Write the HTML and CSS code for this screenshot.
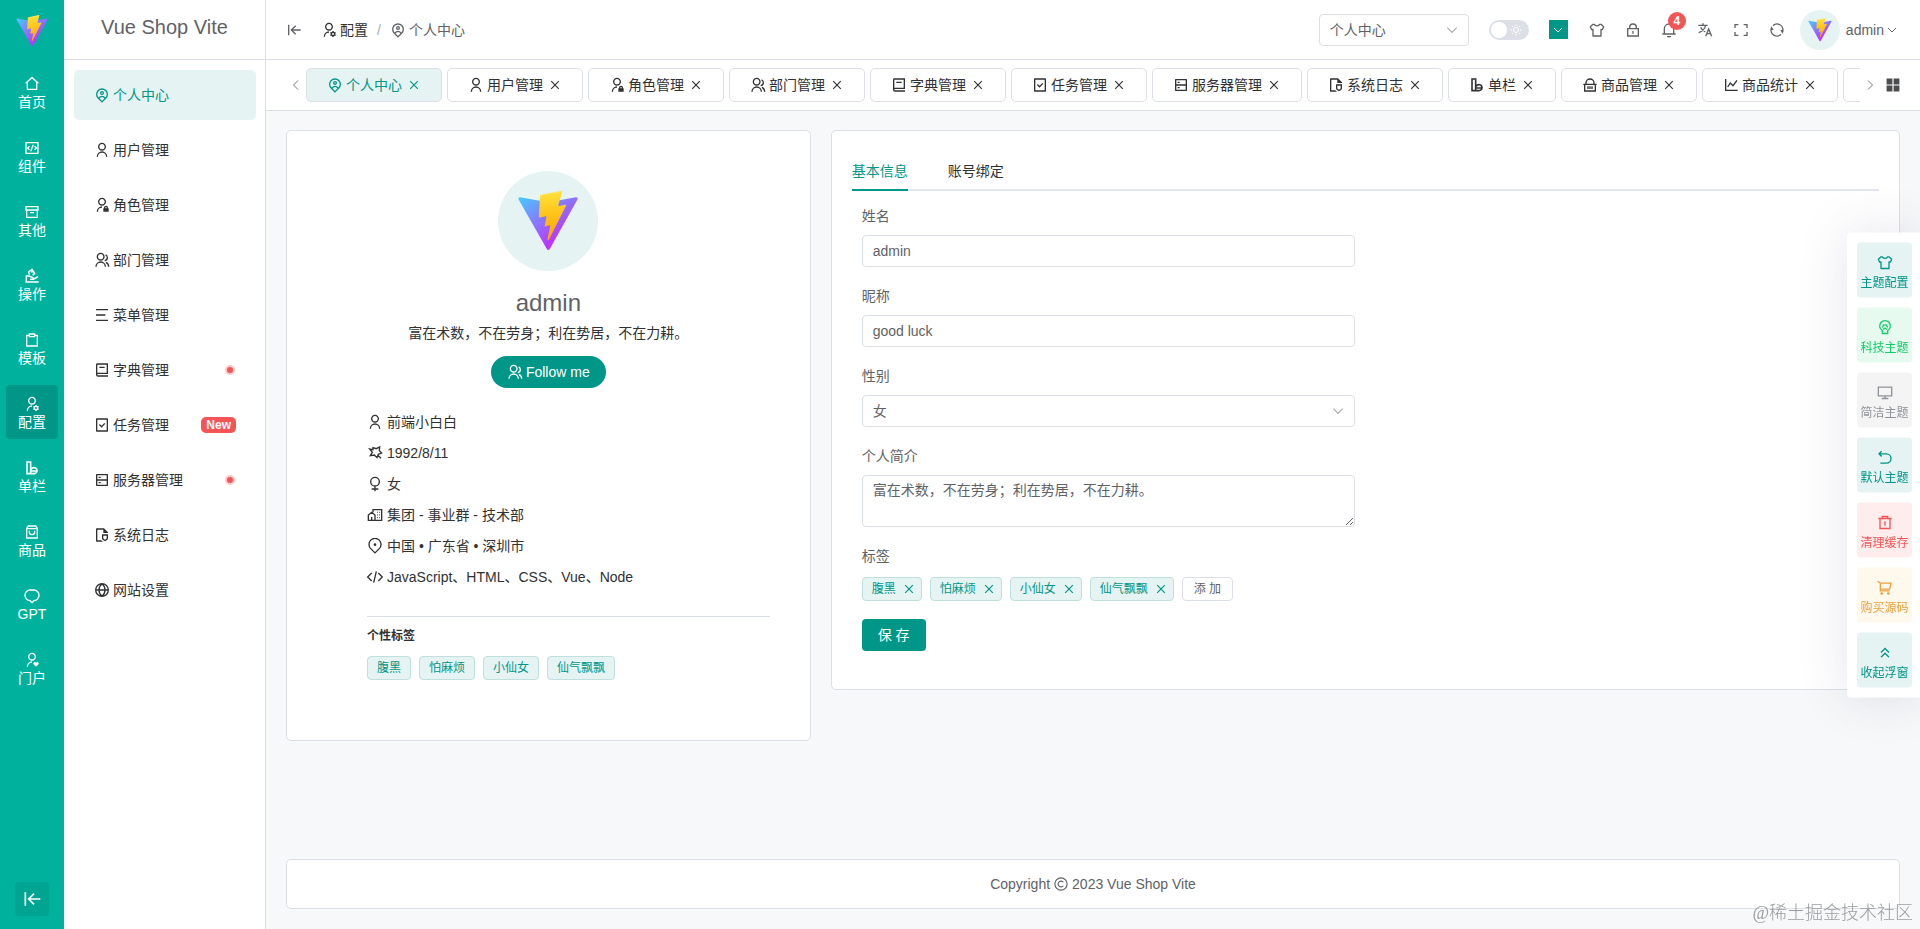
FILE: index.html
```html
<!DOCTYPE html>
<html lang="zh-CN">
<head>
    <meta charset="UTF-8">
    <meta name="viewport" content="width=device-width, initial-scale=1.0">
    <title>个人中心 - Vue Shop Vite</title>
    <link rel="stylesheet" href="styles.css">
</head>
<body>
    <!-- Icon sprite -->
    <svg class="sprite" aria-hidden="true">
        <defs>
            <linearGradient id="logo-blue" x1="6" y1="33" x2="235" y2="344" gradientUnits="userSpaceOnUse">
                <stop stop-color="#41D1FF"/>
                <stop offset="1" stop-color="#BD34FE"/>
            </linearGradient>
            <linearGradient id="logo-yellow" x1="194" y1="9" x2="236" y2="293" gradientUnits="userSpaceOnUse">
                <stop stop-color="#FFEA83"/>
                <stop offset="0.083" stop-color="#FFDD35"/>
                <stop offset="1" stop-color="#FFA800"/>
            </linearGradient>
        </defs>
        <symbol id="i-logo" viewBox="0 0 410 404">
            <path fill="url(#logo-blue)" d="M399.641 59.5246L215.643 388.545C211.844 395.338 202.084 395.378 198.228 388.618L10.5817 59.5563C6.38087 52.1896 12.6802 43.2665 21.0281 44.7586L205.223 77.6824C206.398 77.8924 207.601 77.8904 208.776 77.6763L389.119 44.8058C397.439 43.2894 403.768 52.1434 399.641 59.5246Z"/>
            <path fill="url(#logo-yellow)" d="M292.965 1.5744L156.801 28.2552C154.563 28.6937 152.906 30.5903 152.771 32.8664L144.395 174.33C144.198 177.662 147.258 180.248 150.51 179.498L188.42 170.749C191.967 169.931 195.172 173.055 194.443 176.622L183.18 231.775C182.422 235.487 185.907 238.661 189.532 237.56L212.947 230.446C216.577 229.344 220.065 232.527 219.297 236.242L201.398 322.875C200.278 328.294 207.486 331.249 210.492 326.603L212.5 323.5L323.454 102.072C325.312 98.3645 322.108 94.137 318.036 94.9228L279.014 102.454C275.347 103.161 272.227 99.746 273.262 96.1583L298.731 7.86689C299.767 4.27314 296.636 0.855181 292.965 1.5744Z"/>
        </symbol>
        <symbol id="i-home" viewBox="0 0 24 24"><path d="M19 21H5a1 1 0 0 1-1-1v-9H1l10.327-9.388a1 1 0 0 1 1.346 0L23 11h-3v9a1 1 0 0 1-1 1zM6 19h12V9.157l-6-5.454-6 5.454V19z"/></symbol>
        <symbol id="i-codebox" viewBox="0 0 24 24"><path d="M3 3h18a1 1 0 0 1 1 1v16a1 1 0 0 1-1 1H3a1 1 0 0 1-1-1V4a1 1 0 0 1 1-1zm1 2v14h16V5H4zm16 7-3.500 3.500-1.400-1.400L17.200 12l-2.100-2.100 1.400-1.400L20 12zM6.800 12l2.100 2.100-1.400 1.400L4 12l3.500-3.500 1.400 1.400L6.800 12zm4.400 5H9.100l3.700-10h2.100l-3.700 10z"/></symbol>
        <symbol id="i-archive" viewBox="0 0 24 24"><path d="M3 10H2V4a1 1 0 0 1 1-1h18a1 1 0 0 1 1 1v6h-1v10a1 1 0 0 1-1 1H4a1 1 0 0 1-1-1V10zm16 0H5v9h14v-9zM4 5v3h16V5H4zm5 7h6v2H9v-2z"/></symbol>
        <symbol id="i-hand" viewBox="0 0 24 24"><path d="M2 21h20M3.500 20.500V12h4l6 2.500V17H9M14 17l7-4M8 10 7 6l5-4 4 6-3 3M12 2v5" fill="none" stroke="currentColor" stroke-width="2.200"/></symbol>
        <symbol id="i-clipboard" viewBox="0 0 24 24"><path d="M7 4V2h10v2h3.007c.548 0 .993.445.993.993v16.014a.994.994 0 0 1-.993.993H3.993A.994.994 0 0 1 3 21.007V4.993C3 4.445 3.445 4 3.993 4H7zm0 2H5v14h14V6h-2v2H7V6zm2-2v2h6V4H9z"/></symbol>
        <symbol id="i-user-settings" viewBox="0 0 24 24"><path d="M12 14v2a6 6 0 0 0-6 6H4a8 8 0 0 1 8-8zm0-1c-3.315 0-6-2.685-6-6s2.685-6 6-6 6 2.685 6 6-2.685 6-6 6zm0-2c2.210 0 4-1.790 4-4s-1.790-4-4-4-4 1.790-4 4 1.790 4 4 4zm2.595 7.812a3.510 3.510 0 0 1 0-1.623l-.992-.573 1-1.732.992.573A3.496 3.496 0 0 1 17 14.645V13.500h2v1.145c.532.158 1.012.44 1.405.812l.992-.573 1 1.732-.992.573a3.510 3.510 0 0 1 0 1.622l.992.573-1 1.732-.992-.573a3.496 3.496 0 0 1-1.405.812V22.500h-2v-1.145a3.496 3.496 0 0 1-1.405-.812l-.992.573-1-1.732.992-.572zM18 19.500a1.500 1.500 0 1 0 0-3 1.500 1.500 0 0 0 0 3z"/></symbol>
        <symbol id="i-column" viewBox="0 0 24 24"><path d="M4.500 3H10v17.500H4.500zM10 20.500h5a4.500 4.500 0 0 0 4.500-4.500c0-5-6-6-9-2M10 16.500h9" fill="none" stroke="currentColor" stroke-width="2.400"/></symbol>
        <symbol id="i-bag" viewBox="0 0 24 24"><path d="M6.500 2h11a1 1 0 0 1 .8.4L21 6v15a1 1 0 0 1-1 1H4a1 1 0 0 1-1-1V6l2.700-3.600a1 1 0 0 1 .8-.4zM19 8H5v12h14V8zm-.5-2L17 4H7L5.500 6h13zM9 10v2a3 3 0 0 0 6 0v-2h2v2a5 5 0 0 1-10 0v-2h2z"/></symbol>
        <symbol id="i-chat" viewBox="0 0 24 24"><path d="M10 3h4a8 8 0 0 1 1 16l-3 3-3-3a8 8 0 0 1 1-16z" fill="none" stroke="currentColor" stroke-width="2"/></symbol>
        <symbol id="i-user-heart" viewBox="0 0 24 24"><path d="M12 14v2a6 6 0 0 0-6 6H4a8 8 0 0 1 8-8zm0-1c-3.315 0-6-2.685-6-6s2.685-6 6-6 6 2.685 6 6-2.685 6-6 6zm0-2c2.210 0 4-1.790 4-4s-1.790-4-4-4-4 1.790-4 4 1.790 4 4 4zm5.841 4.659.176.177.178-.177a2.250 2.250 0 0 1 3.182 3.182l-3.360 3.359-3.358-3.359a2.250 2.250 0 0 1 3.182-3.182z"/></symbol>
        <symbol id="i-fold" viewBox="0 0 24 24"><path d="M4 4v16M22 12H9M14.500 5.500 8 12l6.500 6.500" fill="none" stroke="currentColor" stroke-width="2"/></symbol>
        <symbol id="i-pin-user" viewBox="0 0 24 24"><path d="M17.084 15.812a7 7 0 1 0-10.168 0A5.996 5.996 0 0 1 12 13a5.996 5.996 0 0 1 5.084 2.812zm-8.699 1.473L12 20.899l3.615-3.614a4 4 0 0 0-7.230 0zM12 23.728l-6.364-6.364a9 9 0 1 1 12.728 0L12 23.728zM12 10a1 1 0 1 0 0-2 1 1 0 0 0 0 2zm0 2a3 3 0 1 1 0-6 3 3 0 0 1 0 6z"/></symbol>
        <symbol id="i-user" viewBox="0 0 24 24"><path d="M4 22a8 8 0 1 1 16 0h-2a6 6 0 1 0-12 0H4zm8-9c-3.315 0-6-2.685-6-6s2.685-6 6-6 6 2.685 6 6-2.685 6-6 6zm0-2c2.210 0 4-1.790 4-4s-1.790-4-4-4-4 1.790-4 4 1.790 4 4 4z"/></symbol>
        <symbol id="i-admin" viewBox="0 0 24 24"><path d="M12 14v2a6 6 0 0 0-6 6H4a8 8 0 0 1 8-8zm0-1c-3.315 0-6-2.685-6-6s2.685-6 6-6 6 2.685 6 6-2.685 6-6 6zm0-2c2.210 0 4-1.790 4-4s-1.790-4-4-4-4 1.790-4 4 1.790 4 4 4zm9 6h1v5h-8v-5h1v-1a3 3 0 0 1 6 0v1zm-2 0v-1a1 1 0 0 0-2 0v1h2z"/></symbol>
        <symbol id="i-group" viewBox="0 0 24 24"><path d="M2 22a8 8 0 1 1 16 0h-2a6 6 0 1 0-12 0H2zm8-9c-3.315 0-6-2.685-6-6s2.685-6 6-6 6 2.685 6 6-2.685 6-6 6zm0-2c2.210 0 4-1.790 4-4s-1.790-4-4-4-4 1.790-4 4 1.790 4 4 4zm8.284 3.703A8.002 8.002 0 0 1 23 22h-2a6.001 6.001 0 0 0-3.537-5.473l.82-1.824zm-.688-11.290A5.500 5.500 0 0 1 21 8.500a5.499 5.499 0 0 1-5 5.478v-2.013a3.500 3.500 0 0 0 1.041-6.609l.555-1.943z"/></symbol>
        <symbol id="i-menu" viewBox="0 0 24 24"><path d="M3 3h18v2H3V3zm0 8h14v2H3v-2zm0 8h18v2H3v-2z"/></symbol>
        <symbol id="i-book" viewBox="0 0 24 24"><path d="M21 18H6a1 1 0 0 0 0 2h15v2H6a3 3 0 0 1-3-3V4a2 2 0 0 1 2-2h16v16zM5 16.050c.162-.033.329-.05.5-.05H19V4H5v12.050zM16 9H8V7h8v2z"/></symbol>
        <symbol id="i-task" viewBox="0 0 24 24"><path d="M21 2.992v18.016a1 1 0 0 1-.993.992H3.993A.993.993 0 0 1 3 21.008V2.992A1 1 0 0 1 3.993 2h16.014c.548 0 .993.444.993.992zM19 4H5v16h14V4zm-7.707 9.121 4.243-4.242 1.414 1.414-5.657 5.657-3.890-3.890 1.415-1.414 2.475 2.475z"/></symbol>
        <symbol id="i-server" viewBox="0 0 24 24"><path d="M5 11h14V5H5v6zm16-7v16a1 1 0 0 1-1 1H4a1 1 0 0 1-1-1V4a1 1 0 0 1 1-1h16a1 1 0 0 1 1 1zm-2 9H5v6h14v-6zM7 15h3v2H7v-2zm0-8h3v2H7V7z"/></symbol>
        <symbol id="i-log" viewBox="0 0 24 24"><path d="M14 9V4H5v16h6.056c.328.417.724.785 1.180 1.085l1.390.915H3.993A.993.993 0 0 1 3 21.008V2.992C3 2.455 3.449 2 4.002 2h10.995L21 8v1h-7zm-2 2h9v5.949c0 .99-.501 1.916-1.336 2.465L16.500 21.498l-3.164-2.084A2.953 2.953 0 0 1 12 16.950V11zm2 5.949c0 .316.162.614.436.795l2.064 1.360 2.064-1.360a.954.954 0 0 0 .436-.795V13h-5v3.949z"/></symbol>
        <symbol id="i-globe" viewBox="0 0 24 24"><path d="M2 12h20M12 2.500a9.500 9.500 0 1 0 0 19 9.500 9.500 0 1 0 0-19zM12 2.500c-6 5-6 14 0 19M12 2.500c6 5 6 14 0 19" fill="none" stroke="currentColor" stroke-width="2"/></symbol>
        <symbol id="i-basket" viewBox="0 0 24 24"><path d="M2 11h20M4 11v10h16V11M6 11V9a6 6 0 0 1 12 0v2M9 14v4M12 14v4M15 14v4" fill="none" stroke="currentColor" stroke-width="2"/></symbol>
        <symbol id="i-chart" viewBox="0 0 24 24"><path d="M4 3v17h18M7 15l4-6 4 4 6-8" fill="none" stroke="currentColor" stroke-width="2"/></symbol>
        <symbol id="i-close" viewBox="0 0 24 24"><path d="M5.500 5.500l13 13M18.500 5.500l-13 13" fill="none" stroke="currentColor" stroke-width="2"/></symbol>
        <symbol id="i-down" viewBox="0 0 24 24"><path d="M4 8l8 8 8-8" fill="none" stroke="currentColor" stroke-width="2"/></symbol>
        <symbol id="i-left" viewBox="0 0 24 24"><path d="M16 3l-9 9 9 9" fill="none" stroke="currentColor" stroke-width="2"/></symbol>
        <symbol id="i-right" viewBox="0 0 24 24"><path d="M8 3l9 9-9 9" fill="none" stroke="currentColor" stroke-width="2"/></symbol>
        <symbol id="i-grid" viewBox="0 0 24 24"><path d="M1 1h10v10H1zM13 1h10v10H13zM1 13h10v10H1zM13 13h10v10H13z"/></symbol>
        <symbol id="i-sun" viewBox="0 0 24 24"><path d="M12 7a5 5 0 1 0 0 10 5 5 0 1 0 0-10zM12 1v3M12 20v3M1 12h3M20 12h3M4 4l2 2M18 18l2 2M4 20l2-2M18 6l2-2" fill="none" stroke="currentColor" stroke-width="2"/></symbol>
        <symbol id="i-shirt" viewBox="0 0 24 24"><path d="M8 3.500c1 3 7 3 8 0h2l4 3.500-2 4.500-2-.5v10H6V11l-2 .5L2 7l4-3.500z" fill="none" stroke="currentColor" stroke-width="2" stroke-linejoin="round"/></symbol>
        <symbol id="i-lock" viewBox="0 0 24 24"><path d="M4 10h16v11H4zM7 10V8a5 5 0 0 1 10 0v2M12 13.500v4" fill="none" stroke="currentColor" stroke-width="2"/></symbol>
        <symbol id="i-bell" viewBox="0 0 24 24"><path d="M20 17h2v2H2v-2h2v-7a8 8 0 1 1 16 0v7zm-2 0v-7a6 6 0 1 0-12 0v7h12zm-9 4h6v2H9v-2z"/></symbol>
        <symbol id="i-translate" viewBox="0 0 24 24"><path d="M2 5h14M9 2v3M13 5c-1 4-5 9-10.500 11M5.500 8c1 3 4 5.500 7 7M13 21.500l4.500-11 4.500 11M14.500 17.500h6" fill="none" stroke="currentColor" stroke-width="2"/></symbol>
        <symbol id="i-full" viewBox="0 0 24 24"><path d="M3 9V4h5M16 4h5v5M21 15v5h-5M8 20H3v-5" fill="none" stroke="currentColor" stroke-width="2"/></symbol>
        <symbol id="i-refresh" viewBox="0 0 24 24"><path d="M5.463 4.433A9.961 9.961 0 0 1 12 2c5.523 0 10 4.477 10 10 0 2.136-.67 4.116-1.810 5.740L17 12h3A8 8 0 0 0 6.460 6.228l-.997-1.795zm13.074 15.134A9.961 9.961 0 0 1 12 22C6.477 22 2 17.523 2 12c0-2.136.67-4.116 1.810-5.740L7 12H4a8 8 0 0 0 13.540 5.772l.997 1.795z"/></symbol>
        <symbol id="i-star" viewBox="0 0 24 24"><path d="M9 4l5 1.500L19 3l-.5 5.500L22 12l-5 2-2 5-4-4-6 1 3-5-4-5 5 1zM17 16l4 4" fill="none" stroke="currentColor" stroke-width="2"/></symbol>
        <symbol id="i-female" viewBox="0 0 24 24"><path d="M12 2a6.500 6.500 0 1 0 0 13 6.500 6.500 0 1 0 0-13zM12 15v8M7 19.500h10" fill="none" stroke="currentColor" stroke-width="2"/></symbol>
        <symbol id="i-building" viewBox="0 0 24 24"><path d="M9 8V4h13v16H2v-8l5-4 5 4v8M7 20v-5M15 8h1M18 8h1M15 12h1M18 12h1M15 16h1M18 16h1" fill="none" stroke="currentColor" stroke-width="2"/></symbol>
        <symbol id="i-pin" viewBox="0 0 24 24"><path d="M12 22.300l-6.400-6.400a9 9 0 1 1 12.800 0z" fill="none" stroke="currentColor" stroke-width="2"/><circle cx="12" cy="10" r="2"/></symbol>
        <symbol id="i-code" viewBox="0 0 24 24"><path d="M7 6l-6 6 6 6M17 6l6 6-6 6M14 3.500l-4 17" fill="none" stroke="currentColor" stroke-width="2"/></symbol>
        <symbol id="i-copyright" viewBox="0 0 24 24"><circle cx="12" cy="12" r="10.500" fill="none" stroke="currentColor" stroke-width="2"/><path d="M16 9a5 5 0 1 0 0 6" fill="none" stroke="currentColor" stroke-width="2"/></symbol>
        <symbol id="i-robot" viewBox="0 0 24 24"><path d="M8 16.500a8 8 0 1 1 8 0V21H8zM8 12l2-4h4l2 4M9 15l3-2 3 2" fill="none" stroke="currentColor" stroke-width="2"/></symbol>
        <symbol id="i-monitor" viewBox="0 0 24 24"><path d="M2 4h20v13H2zM12 17v4M7 21h10" fill="none" stroke="currentColor" stroke-width="2"/></symbol>
        <symbol id="i-back" viewBox="0 0 24 24"><path d="M7 2.500 3 6.500l4 4M3 6.500h11a7 7 0 0 1 0 14H5" fill="none" stroke="currentColor" stroke-width="2"/></symbol>
        <symbol id="i-trash" viewBox="0 0 24 24"><path d="M2 6h20M4.500 6v15h15V6M8 6V3h8v3M12 10v7" fill="none" stroke="currentColor" stroke-width="2"/></symbol>
        <symbol id="i-cart" viewBox="0 0 24 24"><path d="M1 2.500l4 3h16l-2 9H6M5 5v12h14" fill="none" stroke="currentColor" stroke-width="2"/><circle cx="7" cy="21" r="2"/><circle cx="17" cy="21" r="2"/></symbol>
        <symbol id="i-up2" viewBox="0 0 24 24"><path d="M6 12l6-6 6 6M6 19l6-6 6 6" fill="none" stroke="currentColor" stroke-width="2"/></symbol>
    </svg>

    <!-- First level menu -->
    <nav class="rail">
        <svg class="rail-logo"><use href="#i-logo"/></svg>
        <a class="rail-item" href="#"><svg class="icon"><use href="#i-home"/></svg>首页</a>
        <a class="rail-item" href="#"><svg class="icon"><use href="#i-codebox"/></svg>组件</a>
        <a class="rail-item" href="#"><svg class="icon"><use href="#i-archive"/></svg>其他</a>
        <a class="rail-item" href="#"><svg class="icon"><use href="#i-hand"/></svg>操作</a>
        <a class="rail-item" href="#"><svg class="icon"><use href="#i-clipboard"/></svg>模板</a>
        <a class="rail-item active" href="#"><svg class="icon"><use href="#i-user-settings"/></svg>配置</a>
        <a class="rail-item" href="#"><svg class="icon"><use href="#i-column"/></svg>单栏</a>
        <a class="rail-item" href="#"><svg class="icon"><use href="#i-bag"/></svg>商品</a>
        <a class="rail-item" href="#"><svg class="icon"><use href="#i-chat"/></svg>GPT</a>
        <a class="rail-item" href="#"><svg class="icon"><use href="#i-user-heart"/></svg>门户</a>
        <button class="rail-fold" type="button" aria-label="收起菜单"><svg class="icon"><use href="#i-fold"/></svg></button>
    </nav>

    <!-- Second level menu -->
    <aside class="side">
        <div class="side-title">Vue Shop Vite</div>
        <nav class="side-menu">
            <a class="side-item active" href="#"><svg class="icon"><use href="#i-pin-user"/></svg>个人中心</a>
            <a class="side-item" href="#"><svg class="icon"><use href="#i-user"/></svg>用户管理</a>
            <a class="side-item" href="#"><svg class="icon"><use href="#i-admin"/></svg>角色管理</a>
            <a class="side-item" href="#"><svg class="icon"><use href="#i-group"/></svg>部门管理</a>
            <a class="side-item" href="#"><svg class="icon"><use href="#i-menu"/></svg>菜单管理</a>
            <a class="side-item" href="#"><svg class="icon"><use href="#i-book"/></svg>字典管理<span class="dot"></span></a>
            <a class="side-item" href="#"><svg class="icon"><use href="#i-task"/></svg>任务管理<span class="badge-new">New</span></a>
            <a class="side-item" href="#"><svg class="icon"><use href="#i-server"/></svg>服务器管理<span class="dot"></span></a>
            <a class="side-item" href="#"><svg class="icon"><use href="#i-log"/></svg>系统日志</a>
            <a class="side-item" href="#"><svg class="icon"><use href="#i-globe"/></svg>网站设置</a>
        </nav>
    </aside>

    <div class="page">
        <header class="header">
            <button class="icon-btn" type="button" aria-label="折叠"><svg class="icon"><use href="#i-fold"/></svg></button>
            <div class="breadcrumb">
                <a class="crumb root" href="#"><svg class="icon"><use href="#i-user-settings"/></svg>配置</a>
                <span class="crumb-sep">/</span>
                <span class="crumb"><svg class="icon"><use href="#i-pin-user"/></svg>个人中心</span>
            </div>
            <div class="select-wrap header-select">
                <select class="field" aria-label="菜单搜索"><option>个人中心</option></select>
                <svg class="select-arrow"><use href="#i-down"/></svg>
            </div>
            <label class="switch">
                <input type="checkbox" aria-label="暗黑模式">
                <span class="switch-core"><svg><use href="#i-sun"/></svg></span>
            </label>
            <button class="color-btn" type="button" aria-label="主题色"><svg><use href="#i-down"/></svg></button>
            <div class="tools">
                <button class="icon-btn" type="button" aria-label="主题"><svg class="icon"><use href="#i-shirt"/></svg></button>
                <button class="icon-btn" type="button" aria-label="锁屏"><svg class="icon"><use href="#i-lock"/></svg></button>
                <button class="icon-btn" type="button" aria-label="消息"><svg class="icon"><use href="#i-bell"/></svg><span class="count">4</span></button>
                <button class="icon-btn" type="button" aria-label="语言"><svg class="icon"><use href="#i-translate"/></svg></button>
                <button class="icon-btn" type="button" aria-label="全屏"><svg class="icon"><use href="#i-full"/></svg></button>
                <button class="icon-btn" type="button" aria-label="刷新"><svg class="icon"><use href="#i-refresh"/></svg></button>
            </div>
            <a class="account" href="#">
                <span class="avatar"><svg><use href="#i-logo"/></svg></span>
                admin
                <svg class="account-arrow"><use href="#i-down"/></svg>
            </a>
        </header>

        <div class="tabbar">
            <button class="tab-arrow" type="button" aria-label="向左"><svg><use href="#i-left"/></svg></button>
            <div class="tab-list">
                <a class="tab active" href="#"><svg class="icon"><use href="#i-pin-user"/></svg>个人中心<svg class="tab-close"><use href="#i-close"/></svg></a>
                <a class="tab" href="#"><svg class="icon"><use href="#i-user"/></svg>用户管理<svg class="tab-close"><use href="#i-close"/></svg></a>
                <a class="tab" href="#"><svg class="icon"><use href="#i-admin"/></svg>角色管理<svg class="tab-close"><use href="#i-close"/></svg></a>
                <a class="tab" href="#"><svg class="icon"><use href="#i-group"/></svg>部门管理<svg class="tab-close"><use href="#i-close"/></svg></a>
                <a class="tab" href="#"><svg class="icon"><use href="#i-book"/></svg>字典管理<svg class="tab-close"><use href="#i-close"/></svg></a>
                <a class="tab" href="#"><svg class="icon"><use href="#i-task"/></svg>任务管理<svg class="tab-close"><use href="#i-close"/></svg></a>
                <a class="tab" href="#"><svg class="icon"><use href="#i-server"/></svg>服务器管理<svg class="tab-close"><use href="#i-close"/></svg></a>
                <a class="tab" href="#"><svg class="icon"><use href="#i-log"/></svg>系统日志<svg class="tab-close"><use href="#i-close"/></svg></a>
                <a class="tab" href="#"><svg class="icon"><use href="#i-column"/></svg>单栏<svg class="tab-close"><use href="#i-close"/></svg></a>
                <a class="tab" href="#"><svg class="icon"><use href="#i-basket"/></svg>商品管理<svg class="tab-close"><use href="#i-close"/></svg></a>
                <a class="tab" href="#"><svg class="icon"><use href="#i-chart"/></svg>商品统计<svg class="tab-close"><use href="#i-close"/></svg></a>
                <span class="tab tab-rest"></span>
            </div>
            <button class="tab-arrow" type="button" aria-label="向右"><svg><use href="#i-right"/></svg></button>
            <button class="tab-more" type="button" aria-label="更多"><svg><use href="#i-grid"/></svg></button>
        </div>

        <main class="main">
            <div class="cards">
                <section class="card profile">
                    <div class="profile-avatar"><svg><use href="#i-logo"/></svg></div>
                    <h1 class="profile-name">admin</h1>
                    <p class="profile-bio">富在术数，不在劳身；利在势居，不在力耕。</p>
                    <button class="follow" type="button"><svg class="icon"><use href="#i-group"/></svg>Follow me</button>
                    <div class="profile-info">
                        <ul class="info-list">
                            <li><svg class="icon"><use href="#i-user"/></svg>前端小白白</li>
                            <li><svg class="icon"><use href="#i-star"/></svg>1992/8/11</li>
                            <li><svg class="icon"><use href="#i-female"/></svg>女</li>
                            <li><svg class="icon"><use href="#i-building"/></svg>集团 - 事业群 - 技术部</li>
                            <li><svg class="icon"><use href="#i-pin"/></svg>中国 • 广东省 • 深圳市</li>
                            <li><svg class="icon"><use href="#i-code"/></svg>JavaScript、HTML、CSS、Vue、Node</li>
                        </ul>
                        <h2 class="tags-title">个性标签</h2>
                        <div class="tags">
                            <span class="tag">腹黑</span>
                            <span class="tag">怕麻烦</span>
                            <span class="tag">小仙女</span>
                            <span class="tag">仙气飘飘</span>
                        </div>
                    </div>
                </section>

                <section class="card detail">
                    <div class="pane-tabs">
                        <a class="pane-tab active" href="#">基本信息</a>
                        <a class="pane-tab" href="#">账号绑定</a>
                    </div>
                    <form class="form">
                        <div class="form-item">
                            <label for="name">姓名</label>
                            <input class="field" type="text" id="name" value="admin">
                        </div>
                        <div class="form-item">
                            <label for="nickname">昵称</label>
                            <input class="field" type="text" id="nickname" value="good luck">
                        </div>
                        <div class="form-item">
                            <label for="gender">性别</label>
                            <div class="select-wrap">
                                <select class="field" id="gender"><option>女</option><option>男</option></select>
                                <svg class="select-arrow"><use href="#i-down"/></svg>
                            </div>
                        </div>
                        <div class="form-item">
                            <label for="intro">个人简介</label>
                            <textarea class="field" id="intro">富在术数，不在劳身；利在势居，不在力耕。</textarea>
                        </div>
                        <div class="form-item">
                            <span class="form-label">标签</span>
                            <div class="tags">
                                <span class="tag closable">腹黑<svg><use href="#i-close"/></svg></span>
                                <span class="tag closable">怕麻烦<svg><use href="#i-close"/></svg></span>
                                <span class="tag closable">小仙女<svg><use href="#i-close"/></svg></span>
                                <span class="tag closable">仙气飘飘<svg><use href="#i-close"/></svg></span>
                                <button class="add-tag" type="button">添 加</button>
                            </div>
                        </div>
                        <div class="form-item">
                            <button class="save" type="button">保 存</button>
                        </div>
                    </form>
                </section>
            </div>
            <footer class="footer">Copyright <svg><use href="#i-copyright"/></svg> 2023 Vue Shop Vite</footer>
        </main>
    </div>

    <!-- Floating theme panel -->
    <div class="float">
        <button class="float-item primary" type="button"><svg class="icon"><use href="#i-shirt"/></svg>主题配置</button>
        <button class="float-item success" type="button"><svg class="icon"><use href="#i-robot"/></svg>科技主题</button>
        <button class="float-item info" type="button"><svg class="icon"><use href="#i-monitor"/></svg>简洁主题</button>
        <button class="float-item primary" type="button"><svg class="icon"><use href="#i-back"/></svg>默认主题</button>
        <button class="float-item danger" type="button"><svg class="icon"><use href="#i-trash"/></svg>清理缓存</button>
        <button class="float-item warning" type="button"><svg class="icon"><use href="#i-cart"/></svg>购买源码</button>
        <button class="float-item primary" type="button"><svg class="icon"><use href="#i-up2"/></svg>收起浮窗</button>
    </div>

    <div class="watermark">@稀土掘金技术社区</div>
</body>
</html>
```
FILE: styles.css
```css
:root {
    --primary: #009688;
    --primary-light: #e5f3f2;
    --border: #dcdfe6;
    --text: #303133;
    --text-regular: #606266;
    --danger: #f35455;
}
* {
    box-sizing: border-box;
}
body {
    display: flex;
    min-height: 100vh;
    margin: 0;
    font-family: "Liberation Sans", "Noto Sans CJK SC", sans-serif;
    font-size: 14px;
    line-height: 20px;
    color: var(--text);
    background-color: #f6f8f9;
}
a {
    color: inherit;
    text-decoration: none;
}
button, input, select, textarea {
    font: inherit;
    color: inherit;
}
button {
    padding: 0;
    border: none;
    background: none;
    cursor: pointer;
}
svg {
    flex-shrink: 0;
    fill: currentColor;
}
.sprite {
    position: absolute;
    width: 0;
    height: 0;
}
.icon {
    width: 16px;
    height: 16px;
}

/* First level menu */
.rail {
    position: sticky;
    top: 0;
    display: flex;
    flex-direction: column;
    align-items: center;
    gap: 10px;
    flex-shrink: 0;
    width: 64px;
    height: 100vh;
    padding: 15px 0 13px;
    color: white;
    background-color: #00b29d;
}
.rail-logo {
    width: 34px;
    height: 32px;
    margin-bottom: 8px;
}
.rail-item {
    display: flex;
    flex-direction: column;
    align-items: center;
    justify-content: center;
    width: 52px;
    height: 54px;
    padding-top: 3px;
    border-radius: 4px;
}
.rail-item.active {
    background-color: var(--primary);
}
.rail-fold {
    display: flex;
    align-items: center;
    justify-content: center;
    width: 34px;
    height: 34px;
    margin-top: auto;
    border-radius: 4px;
    background-color: #00a592;
}
.rail-fold .icon {
    width: 20px;
    height: 20px;
}

/* Second level menu */
.side {
    position: sticky;
    top: 0;
    flex-shrink: 0;
    width: 202px;
    height: 100vh;
    border-right: 1px solid var(--border);
    background-color: white;
}
.side-title {
    height: 60px;
    padding-top: 12px;
    border-bottom: 1px solid var(--border);
    font-size: 20px;
    line-height: 30px;
    text-align: center;
    color: var(--text-regular);
}
.side-menu {
    display: flex;
    flex-direction: column;
    gap: 5px;
    padding: 10px 9px 10px 10px;
}
.side-item {
    display: flex;
    align-items: center;
    gap: 3px;
    height: 50px;
    padding: 0 20px;
    border-radius: 5px;
}
.side-item.active {
    color: var(--primary);
    background-color: var(--primary-light);
}
.dot {
    width: 6px;
    height: 6px;
    margin: 0 3px 0 auto;
    border-radius: 50%;
    background-color: var(--danger);
    box-shadow: 0 0 0 2px #fbc8c8;
}
.badge-new {
    height: 16px;
    margin-left: auto;
    padding: 0 5px;
    border-radius: 5px;
    font-size: 12px;
    font-weight: bold;
    line-height: 16px;
    color: white;
    background-color: var(--danger);
}

/* Header */
.page {
    display: flex;
    flex-direction: column;
    flex: 1;
    min-width: 0;
}
.header {
    display: flex;
    align-items: center;
    height: 60px;
    padding: 0 22px 0 20px;
    border-bottom: 1px solid var(--border);
    color: var(--text-regular);
    background-color: white;
}
.icon-btn {
    position: relative;
    display: flex;
}
.breadcrumb {
    display: flex;
    align-items: center;
    margin-left: 19px;
}
.crumb {
    display: flex;
    align-items: center;
    gap: 3px;
}
.crumb.root {
    color: var(--text);
}
.crumb-sep {
    margin: 0 9px;
    color: #a8abb2;
}
.select-wrap {
    position: relative;
}
.select-arrow {
    position: absolute;
    top: 9px;
    right: 10px;
    width: 14px;
    height: 14px;
    color: #a8abb2;
    pointer-events: none;
}
.field {
    display: block;
    width: 100%;
    height: 32px;
    padding: 0 10px;
    border: 1px solid var(--border);
    border-radius: 4px;
    outline: none;
    appearance: none;
    color: var(--text-regular);
    background-color: white;
}
.header-select {
    width: 150px;
    margin-left: auto;
}
.switch {
    position: relative;
    margin-left: 20px;
}
.switch input {
    position: absolute;
    opacity: 0;
}
.switch-core {
    display: flex;
    align-items: center;
    justify-content: space-between;
    width: 40px;
    height: 20px;
    padding: 0 7px 0 2px;
    border-radius: 10px;
    color: white;
    background-color: var(--border);
}
.switch-core::before {
    content: "";
    width: 16px;
    height: 16px;
    border-radius: 50%;
    background-color: white;
}
.switch-core svg {
    width: 12px;
    height: 12px;
}
.color-btn {
    display: flex;
    align-items: center;
    justify-content: center;
    width: 19px;
    height: 19px;
    margin-left: 20px;
    color: white;
    background-color: var(--primary);
}
.color-btn svg {
    width: 12px;
    height: 12px;
}
.tools {
    display: flex;
    gap: 20px;
    margin: 0 15px 0 21px;
}
.count {
    position: absolute;
    top: -10px;
    left: 7px;
    width: 18px;
    height: 18px;
    border-radius: 9px;
    font-size: 12px;
    font-weight: bold;
    line-height: 18px;
    color: white;
    background-color: var(--danger);
}
.account {
    display: flex;
    align-items: center;
}
.avatar {
    display: flex;
    align-items: center;
    justify-content: center;
    width: 40px;
    height: 40px;
    margin-right: 6px;
    border-radius: 50%;
    background-color: var(--primary-light);
}
.avatar svg {
    width: 24px;
    height: 24px;
}
.account-arrow {
    width: 12px;
    height: 12px;
    margin-left: 2px;
}

/* Opened tabs */
.tabbar {
    display: flex;
    align-items: center;
    height: 51px;
    padding: 0 20px;
    border-bottom: 1px solid var(--border);
    background-color: white;
}
.tab-arrow {
    display: flex;
    align-items: center;
    justify-content: center;
    flex-shrink: 0;
    width: 20px;
    height: 34px;
    color: #73767a;
}
.tab-arrow svg {
    width: 12px;
    height: 12px;
}
.tab-list {
    display: flex;
    gap: 5px;
    flex: 1;
    min-width: 0;
    overflow: hidden;
}
.tab {
    display: flex;
    align-items: center;
    gap: 3px;
    flex-shrink: 0;
    height: 34px;
    padding: 0 20px;
    border: 1px solid var(--border);
    border-radius: 5px;
}
.tab.active {
    color: var(--primary);
    background-color: var(--primary-light);
}
.tab-close {
    width: 14px;
    height: 14px;
    margin-left: 2px;
}
.tab-rest {
    width: 136px;
}
.tab-more {
    display: flex;
    flex-shrink: 0;
    margin-left: 6px;
    color: #4c4d4f;
}
.tab-more svg {
    width: 14px;
    height: 14px;
}

/* Content */
.main {
    display: flex;
    flex-direction: column;
    flex: 1;
    padding: 19px 20px 20px;
}
.cards {
    display: grid;
    grid-template-columns: repeat(3, 1fr);
    align-items: start;
    gap: 20px;
    margin-bottom: 20px;
}
.card {
    padding: 20px;
    border: 1px solid var(--border);
    border-radius: 5px;
    background-color: white;
}
.profile {
    padding: 40px 40px 60px;
    text-align: center;
}
.profile-avatar {
    display: flex;
    align-items: center;
    justify-content: center;
    width: 100px;
    height: 100px;
    margin: 0 auto;
    border-radius: 50%;
    background-color: var(--primary-light);
}
.profile-avatar svg {
    width: 62px;
    height: 62px;
}
.profile-name {
    margin: 17px 0 0;
    font-size: 24px;
    font-weight: normal;
    line-height: 30px;
    color: var(--text-regular);
}
.profile-bio {
    margin: 5px 0 13px;
}
.follow {
    display: inline-flex;
    align-items: center;
    justify-content: center;
    gap: 3px;
    height: 32px;
    padding: 0 16px;
    border-radius: 16px;
    color: white;
    background-color: var(--primary);
}
.profile-info {
    padding-left: 40px;
    text-align: left;
}
.info-list {
    margin: 18px 0 0;
    padding: 0 0 24px;
    border-bottom: 1px solid var(--border);
    list-style: none;
}
.info-list li {
    display: flex;
    align-items: center;
    gap: 4px;
    height: 31px;
}
.tags-title {
    margin: 9px 0 10px;
    font-size: 12px;
    line-height: 20px;
}
.tags {
    display: flex;
    flex-wrap: wrap;
    gap: 8px;
}
.tag {
    display: flex;
    align-items: center;
    height: 24px;
    padding: 0 9px;
    border: 1px solid #bfe0dd;
    border-radius: 4px;
    font-size: 12px;
    color: var(--primary);
    background-color: var(--primary-light);
}
.tag.closable {
    gap: 6px;
    padding-right: 5px;
}
.tag svg {
    width: 14px;
    height: 14px;
}

/* Detail form */
.detail {
    grid-column: span 2;
}
.pane-tabs {
    display: flex;
    gap: 40px;
    height: 40px;
    border-bottom: 2px solid #e4e7ed;
    line-height: 40px;
}
.pane-tab {
    height: 40px;
}
.pane-tab.active {
    border-bottom: 2px solid var(--primary);
    color: var(--primary);
}
.form {
    width: calc(50% - 20px);
    margin: 14px 10px 0;
}
.form-item {
    margin-bottom: 18px;
}
.form-item label, .form-label {
    display: block;
    margin-bottom: 8px;
    line-height: 22px;
    color: var(--text-regular);
}
.form textarea {
    height: 52px;
    padding: 4px 10px;
    resize: vertical;
}
.form .tags {
    margin-top: 10px;
}
.add-tag {
    height: 24px;
    padding: 0 11px;
    border: 1px solid var(--border);
    border-radius: 4px;
    font-size: 12px;
    color: var(--text-regular);
    background-color: white;
}
.save {
    height: 32px;
    padding: 0 16px;
    border-radius: 4px;
    color: white;
    background-color: var(--primary);
}
.footer {
    display: flex;
    align-items: center;
    justify-content: center;
    gap: 4px;
    height: 50px;
    margin-top: auto;
    border: 1px solid var(--border);
    border-radius: 5px;
    color: var(--text-regular);
    background-color: white;
}
.footer svg {
    width: 14px;
    height: 14px;
}

/* Floating theme panel */
.float {
    position: fixed;
    top: 50%;
    right: 0;
    display: flex;
    flex-direction: column;
    gap: 10px;
    padding: 10px 8px 10px 10px;
    border-radius: 4px 0 0 4px;
    background-color: white;
    box-shadow: 0 0 50px rgba(82, 63, 105, 0.15);
    transform: translateY(-50%);
}
.float-item {
    display: flex;
    flex-direction: column;
    align-items: center;
    justify-content: center;
    gap: 2px;
    width: 55px;
    height: 55px;
    padding-top: 7px;
    border-radius: 4px;
    font-size: 12px;
}
.float-item.primary {
    color: var(--primary);
    background-color: var(--primary-light);
}
.float-item.success {
    color: #13ce66;
    background-color: #e7faf0;
}
.float-item.info {
    color: #909399;
    background-color: #f4f4f5;
}
.float-item.danger {
    color: var(--danger);
    background-color: #ffeded;
}
.float-item.warning {
    color: #e6a23c;
    background-color: #fff8ec;
}
.watermark {
    position: fixed;
    right: 7px;
    bottom: 4px;
    font-family: "Liberation Serif", "Noto Sans CJK SC", serif;
    font-size: 18px;
    font-weight: 300;
    line-height: 24px;
    color: #9a9c9f;
}
```
